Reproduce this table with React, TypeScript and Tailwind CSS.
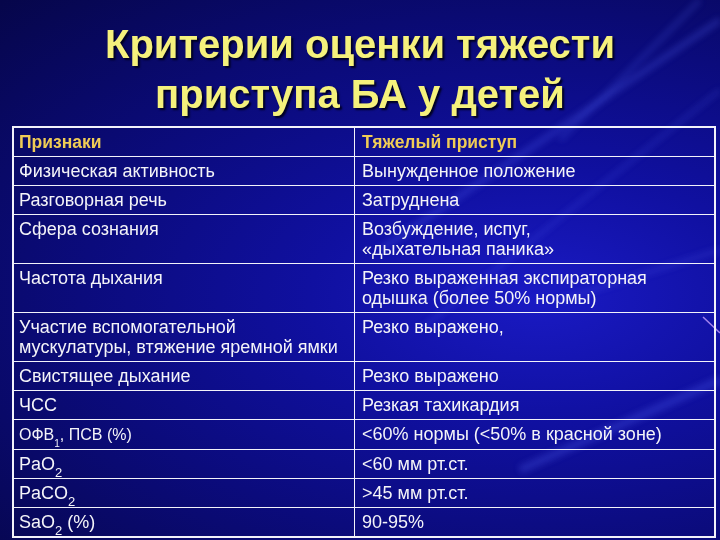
import React from 'react';

type Row = { left: React.ReactNode; right: React.ReactNode; head?: boolean };

const Sub = ({ children }: { children: React.ReactNode }) => (
  <sub className="relative top-[2px] align-sub text-[13px]">{children}</sub>
);

const ROWS: Row[] = [
  { left: 'Признаки', right: 'Тяжелый приступ', head: true },
  { left: 'Физическая активность', right: 'Вынужденное положение' },
  { left: 'Разговорная речь', right: 'Затруднена' },
  { left: 'Сфера сознания', right: <>Возбуждение, испуг,<br />«дыхательная паника»</> },
  { left: 'Частота дыхания', right: <>Резко выраженная экспираторная<br />одышка (более 50% нормы)</> },
  { left: <>Участие вспомогательной<br />мускулатуры, втяжение яремной ямки</>, right: 'Резко выражено,' },
  { left: 'Свистящее дыхание', right: 'Резко выражено' },
  { left: 'ЧСС', right: 'Резкая тахикардия' },
  {
    left: <span className="text-[16px]">ОФВ<sub className="align-sub text-[10px]">1</sub>, ПСВ (%)</span>,
    right: '<60% нормы (<50% в красной зоне)',
  },
  { left: <>PaO<Sub>2</Sub></>, right: '<60 мм рт.ст.' },
  { left: <>PaCO<Sub>2</Sub></>, right: '>45 мм рт.ст.' },
  { left: <>SaO<Sub>2</Sub> (%)</>, right: '90-95%' },
];

export default function App() {
  return (
    <div className="relative h-[540px] w-[720px] overflow-hidden bg-[radial-gradient(ellipse_at_75%_55%,#1a1ac4_0%,#1010a0_30%,#0b0b7c_60%,#06064a_100%)] font-['Liberation_Sans',Arial,sans-serif]">
      {/* background streaks */}
      <svg className="absolute inset-0" width="720" height="540" viewBox="0 0 720 540">
        <defs>
          <filter id="blur" x="-20%" y="-20%" width="140%" height="140%">
            <feGaussianBlur stdDeviation="3" />
          </filter>
        </defs>
        <g filter="url(#blur)" stroke="#5a6cff" fill="none">
          <path d="M720 20 L380 250" strokeWidth="6" opacity="0.25" />
          <path d="M720 90 L420 330" strokeWidth="4" opacity="0.2" />
          <path d="M720 380 L520 470" strokeWidth="8" opacity="0.25" />
          <path d="M700 0 L560 140" strokeWidth="5" opacity="0.2" />
          <path d="M720 250 L560 300" strokeWidth="5" opacity="0.18" />
        </g>
        <path d="M703 317 L720 333" stroke="#c8a0ff" strokeWidth="1.5" opacity="0.8" />
      </svg>

      <h1 className="relative pt-[19px] text-center text-[40px] font-bold leading-[50px] text-[#f5f17c] [text-shadow:2px_2px_2px_#000020]">
        Критерии оценки тяжести
        <br />
        приступа БА у детей
      </h1>

      <div className="relative ml-[12px] mt-[7px] grid w-[704px] grid-cols-[341px_1fr] border-2 border-[#f2f2fa] text-[18px] leading-[20px] text-[#f4f4f8]">
        {ROWS.map((r, i) => (
          <React.Fragment key={i}>
            <div
              className={`border-r border-[#f2f2fa] pb-[4px] pl-[5px] pt-[4px] ${i > 0 ? 'border-t' : ''} ${r.head ? 'text-[17.5px] font-bold text-[#f0cc55]' : ''}`}
            >
              {r.left}
            </div>
            <div
              className={`pb-[4px] pl-[7px] pt-[4px] ${i > 0 ? 'border-t border-[#f2f2fa]' : ''} ${r.head ? 'text-[17.5px] font-bold text-[#f0cc55]' : ''}`}
            >
              {r.right}
            </div>
          </React.Fragment>
        ))}
      </div>
    </div>
  );
}
